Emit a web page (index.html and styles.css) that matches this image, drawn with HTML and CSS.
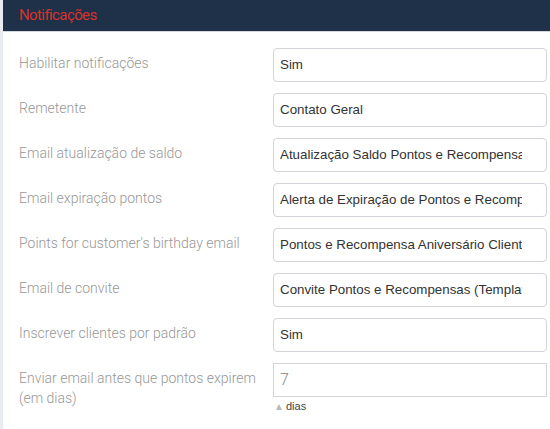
FILE: index.html
```html
<!DOCTYPE html>
<html lang="pt">
<head>
<meta charset="utf-8">
<title>Notificações</title>
<link rel="stylesheet" href="styles.css">
</head>
<body>
<div class="panel">
  <div class="panel-header">Notificações</div>
  <div class="form">
    <div class="row">
      <div class="label">Habilitar notificações</div>
      <div class="field"><div class="input"><span class="value">Sim</span></div></div>
    </div>
    <div class="row">
      <div class="label">Remetente</div>
      <div class="field"><div class="input"><span class="value">Contato Geral</span></div></div>
    </div>
    <div class="row">
      <div class="label">Email atualização de saldo</div>
      <div class="field"><div class="input"><span class="value">Atualização Saldo Pontos e Recompensas</span></div></div>
    </div>
    <div class="row">
      <div class="label">Email expiração pontos</div>
      <div class="field"><div class="input"><span class="value">Alerta de Expiração de Pontos e Recompensas</span></div></div>
    </div>
    <div class="row">
      <div class="label">Points for customer's birthday email</div>
      <div class="field"><div class="input"><span class="value">Pontos e Recompensa Aniversário Cliente</span></div></div>
    </div>
    <div class="row">
      <div class="label">Email de convite</div>
      <div class="field"><div class="input"><span class="value">Convite Pontos e Recompensas (Template)</span></div></div>
    </div>
    <div class="row">
      <div class="label">Inscrever clientes por padrão</div>
      <div class="field"><div class="input"><span class="value">Sim</span></div></div>
    </div>
    <div class="row">
      <div class="label">Enviar email antes que pontos expirem (em dias)</div>
      <div class="field">
        <div class="input text-input"><span class="value">7</span></div>
        <div class="hint"><span class="tri"></span>dias</div>
      </div>
    </div>
  </div>
</div>
</body>
</html>
```
FILE: styles.css
```css
html, body {
  margin: 0;
  padding: 0;
  background: #ffffff;
}
body {
  width: 550px;
  height: 429px;
  overflow: hidden;
  font-family: Roboto, "Liberation Sans", sans-serif;
}
.panel {
  border-left: 3px solid #e8ecf1;
  height: 429px;
  box-sizing: border-box;
}
.panel-header {
  background: #1f3049;
  color: #d9322b;
  font-size: 15px;
  font-weight: 400;
  letter-spacing: -0.6px;
  height: 32px;
  line-height: 30px;
  padding-left: 16px;
  border-bottom: 1px solid #d4d8de;
  box-sizing: border-box;
}
.form {
  padding-top: 16px;
  display: flex;
  flex-direction: column;
  gap: 11px;
}
.row {
  display: flex;
  align-items: flex-start;
}
.label {
  width: 270px;
  flex: none;
  padding-left: 16px;
  box-sizing: border-box;
  padding-right: 12px;
  padding-top: 5px;
  font-size: 14px;
  font-weight: 300;
  line-height: 20px;
  color: #979797;
}
.field {
  width: 274px;
  flex: none;
}
.input {
  height: 34px;
  box-sizing: border-box;
  border: 1px solid #d3d3d9;
  border-radius: 4px;
  padding: 0 24px 0 6px;
  font-family: "Liberation Sans", Arial, sans-serif;
  font-size: 13.33px;
  line-height: 32px;
  color: #333;
}
.value {
  display: block;
  white-space: nowrap;
  overflow: hidden;
}
.text-input {
  border-radius: 0;
  font-family: Roboto, sans-serif;
  font-weight: 300;
  font-size: 16px;
  color: #888;
}
.hint {
  display: flex;
  align-items: center;
  gap: 4px;
  padding-left: 3px;
  margin-top: 3px;
  font-family: "Liberation Sans", Arial, sans-serif;
  font-size: 11px;
  color: #444;
}
.tri {
  width: 0;
  height: 0;
  border-left: 3.5px solid transparent;
  border-right: 3.5px solid transparent;
  border-bottom: 6px solid #b9b9b9;
  margin-top: 2px;
}
```
